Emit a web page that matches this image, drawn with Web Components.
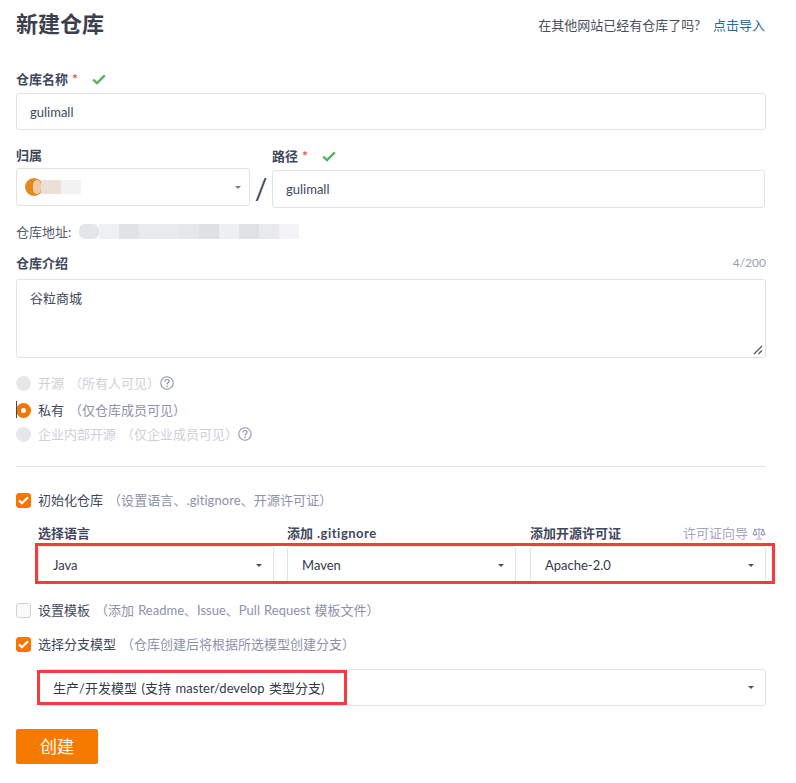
<!DOCTYPE html>
<html lang="zh"><head><meta charset="utf-8"><title>新建仓库</title>
<style>
html,body{margin:0;padding:0;background:#fff}
body{font:13px/20px Lato,"Noto Sans CJK SC",sans-serif;color:#40485b}
</style></head><body>
<repo-form></repo-form>
<script>
function comp(name, css, html){
  customElements.define(name, class extends HTMLElement{
    connectedCallback(){
      if(this.shadowRoot) return;
      const r=this.attachShadow({mode:'open'});
      const h=typeof html==='function'?html(this):html;
      r.innerHTML='<style>'+css+'</style>'+h;
    }
  });
}
const CHECK='<svg width="14" height="11" viewBox="0 0 14 11"><path d="M1.2 5.6 5 9.2 12.8 1.4" fill="none" stroke="#5cb060" stroke-width="2.4"/></svg>';
comp('x-label',`:host{display:flex;align-items:center;height:20px;font-weight:700;color:#40485b;font-size:13px}
 .req{color:#f0524f;margin-left:4px;font-weight:700;font-size:14px;width:7px}
 .ok{display:inline-flex;margin-left:13px}`,
 e=>'<slot></slot>'+(e.hasAttribute('req')?'<span class="req">*</span>':'')+(e.hasAttribute('ok')?'<span class="ok">'+CHECK+'</span>':''));
comp('x-input',`:host{display:flex;align-items:center;box-sizing:border-box;border:1px solid #e2e3e9;border-radius:3px;padding:0 13px;color:#40485b;font-size:13px;background:#fff;height:38px}`,'<slot></slot>');
comp('x-select',`:host{display:flex;align-items:center;justify-content:space-between;box-sizing:border-box;border:1px solid #e2e3e9;border-radius:3px;padding:0 14px;color:#333a4b;font-size:13px;background:#fff;height:38px}
 i{width:0;height:0;border:3.5px solid transparent;border-top-color:var(--caret,#4b5162);border-bottom:0;margin-right:var(--caret-m,-3px);flex:none}`,'<span><slot></slot></span><i></i>');
comp('x-help',`:host{display:inline-flex}`,'<svg width="14" height="14" viewBox="0 0 14 14"><circle cx="7" cy="7" r="6.2" fill="none" stroke="#9095ac" stroke-width="1.1"/><path d="M4.9 5.5C4.9 2.9 9.1 2.9 9.1 5.3 9.1 6.9 7 6.8 7 8.6" fill="none" stroke="#9095ac" stroke-width="1.2"/><circle cx="7" cy="10.4" r=".8" fill="#9095ac"/></svg>');
comp('x-radio',`:host{display:flex;align-items:center;height:20px;color:#40485b;font-size:13px}
 .dot{box-sizing:border-box;width:15px;height:15px;border-radius:50%;background:#e7e7e9;margin-right:7px;flex:none}
 :host([on]) .dot{background:#fff;border:5px solid #f57600}
 :host([off]){color:#cfd0d6}
 .sub{margin-left:5px;color:#8d92ab}
 :host([off]) .sub{color:#cfd0d6}`,
 e=>'<span class="dot"></span><span>'+e.getAttribute('text')+'</span><span class="sub">'+e.getAttribute('sub')+'</span><slot></slot>');
comp('x-check',`:host{display:flex;align-items:center;height:20px;color:#40485b;font-size:13px}
 .box{box-sizing:border-box;width:15px;height:15px;border-radius:3px;border:1px solid #cfd1da;background:#fafafb;margin-right:7px;flex:none;display:flex;align-items:center;justify-content:center}
 :host([on]) .box{background:#f57600;border-color:#f57600}
 .sub{margin-left:5px;color:#8d92ab;word-spacing:.8px;letter-spacing:var(--ls,0)}`,
 e=>'<span class="box">'+(e.hasAttribute('on')?'<svg width="11" height="9" viewBox="0 0 11 9"><path d="M1 4.4 4 7.3 10 1.3" fill="none" stroke="#fff" stroke-width="2.2"/></svg>':'')+'</span><span>'+e.getAttribute('text')+'</span><span class="sub">'+e.getAttribute('sub')+'</span>');
comp('x-button',`:host{display:flex;align-items:center;justify-content:center;width:82px;height:35px;background:#f67a00;color:#fff;border-radius:2px;font-size:17px}`,'<slot></slot>');
comp('x-mark',`:host{position:absolute;box-sizing:border-box;border:3px solid #f53b3b;pointer-events:none}`,'');
comp('repo-form',`
 :host{display:block;box-sizing:border-box;width:796px;height:783px;padding:0 30px 0 16px;position:relative;overflow:hidden}
 header{display:flex;justify-content:space-between;align-items:center;height:50px}
 h1{margin:0 0 2px;font-size:22px;line-height:30px;font-weight:700;color:#3c404c}
 .imp{color:#4a4f5a;padding-right:1px}.imp a{color:#2f6791;margin-left:13px;text-decoration:none}
 .name{margin-top:19px}.name x-input{margin-top:4px;height:37px}
 .owner{display:flex;align-items:flex-start;margin-top:15px}
 .oc{width:234px;flex:none}.oc x-select{margin-top:3px;--caret:#777c8c;--caret-m:-6px}
 .slash{width:22px;flex:none;margin-top:23px;font-size:28px;line-height:40px;text-align:center;color:#40485b;font-weight:400}
 .pc{width:493px;flex:none;margin-top:1px}.pc x-input{margin-top:4px}
 .addr{display:flex;align-items:center;margin-top:14px;height:20px;color:#555b6c}
 .addr svg{margin-left:8px}
 .introh{display:flex;justify-content:space-between;align-items:center;margin-top:11px}
 .cnt{color:#9a9eb2;font-size:12px}
 .ta{box-sizing:border-box;height:79px;margin-top:6px;border:1px solid #e2e3e9;border-radius:3px;padding:8px 13px;color:#40485b;position:relative}
 .ta svg{position:absolute;right:1px;bottom:1px}
 .r1{margin-top:15px}.r2{margin-top:7px;position:relative}.r3{margin-top:4px}
 .caret{position:absolute;left:0;top:1px;width:1px;height:17px;background:#40485b}
 hr{border:0;border-top:1px solid #e3e4ea;margin:22px 0 0}
 .c1{margin-top:23px;--ls:.08px}
 .cols{display:grid;grid-template-columns:236px 229px 236px;column-gap:13px;margin:13px 0 0 22px;width:728px}
 .cols>:nth-child(3){margin-left:1px;width:236px}
 .cols .top{display:flex;justify-content:space-between;align-items:center}
 .guide{display:flex;align-items:center;color:#a3a7bb;gap:4px}
 .cols x-select{margin-top:3px}
 .git{letter-spacing:.5px;margin-left:4px}
 .c2{margin-top:16px}.c3{margin-top:14px}
 .model{margin:15px 0 0 22px;height:37px;word-spacing:1.3px}
 x-button{margin-top:23px}
 x-mark.a{left:35px;top:543px;width:740px;height:41px}
 x-mark.b{left:37px;top:670px;width:310px;height:35px}
 `,`
 <header><h1>新建仓库</h1><div class="imp">在其他网站已经有仓库了吗?<a>点击导入</a></div></header>
 <div class="name"><x-label req ok>仓库名称</x-label><x-input>gulimall</x-input></div>
 <div class="owner">
  <div class="oc"><x-label>归属</x-label><x-select><svg width="60" height="20" viewBox="0 0 60 20" style="display:block;margin-left:-10px"><circle cx="13" cy="10" r="9" fill="#e28a1e"/><rect x="12" y="3" width="8" height="14" rx="5" fill="#efcba8"/><rect x="20" y="3" width="20" height="14" fill="#ebe0d8"/><rect x="40" y="3" width="20" height="14" rx="1" fill="#f2f2f3"/></svg></x-select></div>
  <div class="slash">/</div>
  <div class="pc"><x-label req ok>路径</x-label><x-input>gulimall</x-input></div>
 </div>
 <div class="addr">仓库地址:<svg width="220" height="16" viewBox="0 0 220 16"><rect x="0" width="20" height="15" rx="6" fill="#e4e5e9"/><rect x="20" width="20" height="15" fill="#eff0f2"/><rect x="40" width="20" height="15" fill="#e0e2e6"/><rect x="60" width="40" height="15" fill="#e9eaec"/><rect x="100" width="20" height="15" fill="#e6e7ea"/><rect x="120" width="20" height="15" fill="#dfe0e4"/><rect x="140" width="20" height="15" fill="#eeeff1"/><rect x="160" width="20" height="15" fill="#e0e1e5"/><rect x="180" width="20" height="15" fill="#e9eaec"/><rect x="200" width="20" height="15" fill="#f3f3f5"/></svg></div>
 <div class="introh"><x-label>仓库介绍</x-label><span class="cnt">4/200</span></div>
 <div class="ta">谷粒商城<svg width="12" height="12" viewBox="0 0 12 12"><path d="M2 10 10 2M6.5 10 10 6.5" stroke="#555" stroke-width="1.2" fill="none"/></svg></div>
 <x-radio class="r1" off text="开源" sub="（所有人可见）"><x-help></x-help></x-radio>
 <div class="r2"><x-radio on text="私有" sub="（仅仓库成员可见）"></x-radio><span class="caret"></span></div>
 <x-radio class="r3" off text="企业内部开源" sub="（仅企业成员可见）"><x-help></x-help></x-radio>
 <hr>
 <x-check class="c1" on text="初始化仓库" sub="（设置语言、.gitignore、开源许可证）"></x-check>
 <div class="cols">
  <div><x-label>选择语言</x-label><x-select>Java</x-select></div>
  <div><x-label>添加<span class="git">.gitignore</span></x-label><x-select>Maven</x-select></div>
  <div><div class="top"><x-label>添加开源许可证</x-label><span class="guide">许可证向导<svg width="14" height="13" viewBox="0 0 14 13"><path d="M7 1V11M4 12H10M2 2.5H12M3 2.5 1 7.2H5ZM11 2.5 9 7.2H13Z" fill="none" stroke="#a3a7bb" stroke-width="1.1"/><path d="M1 7.2C1.5 9.4 4.5 9.4 5 7.2ZM9 7.2C9.5 9.4 12.5 9.4 13 7.2Z" fill="#a3a7bb"/></svg></span></div><x-select>Apache-2.0</x-select></div>
 </div>
 <x-check class="c2" text="设置模板" sub="（添加 Readme、Issue、Pull Request 模板文件）"></x-check>
 <x-check class="c3" on text="选择分支模型" sub="（仓库创建后将根据所选模型创建分支）"></x-check>
 <x-select class="model">生产/开发模型 (支持 master/develop 类型分支)</x-select>
 <x-button>创建</x-button>
 <x-mark class="a"></x-mark><x-mark class="b"></x-mark>
 `);
</script></body></html>
